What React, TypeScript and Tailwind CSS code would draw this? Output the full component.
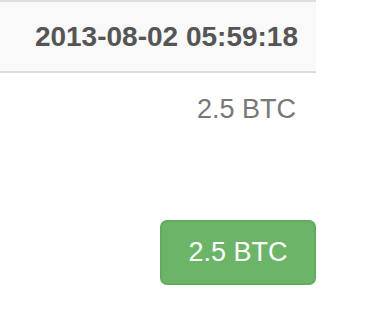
export default function App() {
  return (
    <div className="w-[385px] h-[335px] bg-white" style={{ fontFamily: '"Liberation Sans", Arial, sans-serif' }}>
      <div className="w-[316px]">
        <div className="h-[73px] bg-[#f9f9f9] border-y-2 border-[#dddddd] flex items-center justify-end pr-[18px]">
          <span className="text-[28px] font-bold text-[#555555] leading-none">2013-08-02 05:59:18</span>
        </div>
        <div className="flex justify-end pr-[20px] pt-[23px]">
          <span className="text-[27px] text-[#777777] leading-none">2.5 BTC</span>
        </div>
        <div className="flex justify-end pt-[97px]">
          <div className="w-[156px] h-[65px] rounded-[7px] bg-[#6cb467] border-2 border-[#62ab5d] flex items-center justify-center">
            <span className="text-[27px] text-white leading-none">2.5 BTC</span>
          </div>
        </div>
      </div>
    </div>
  );
}
